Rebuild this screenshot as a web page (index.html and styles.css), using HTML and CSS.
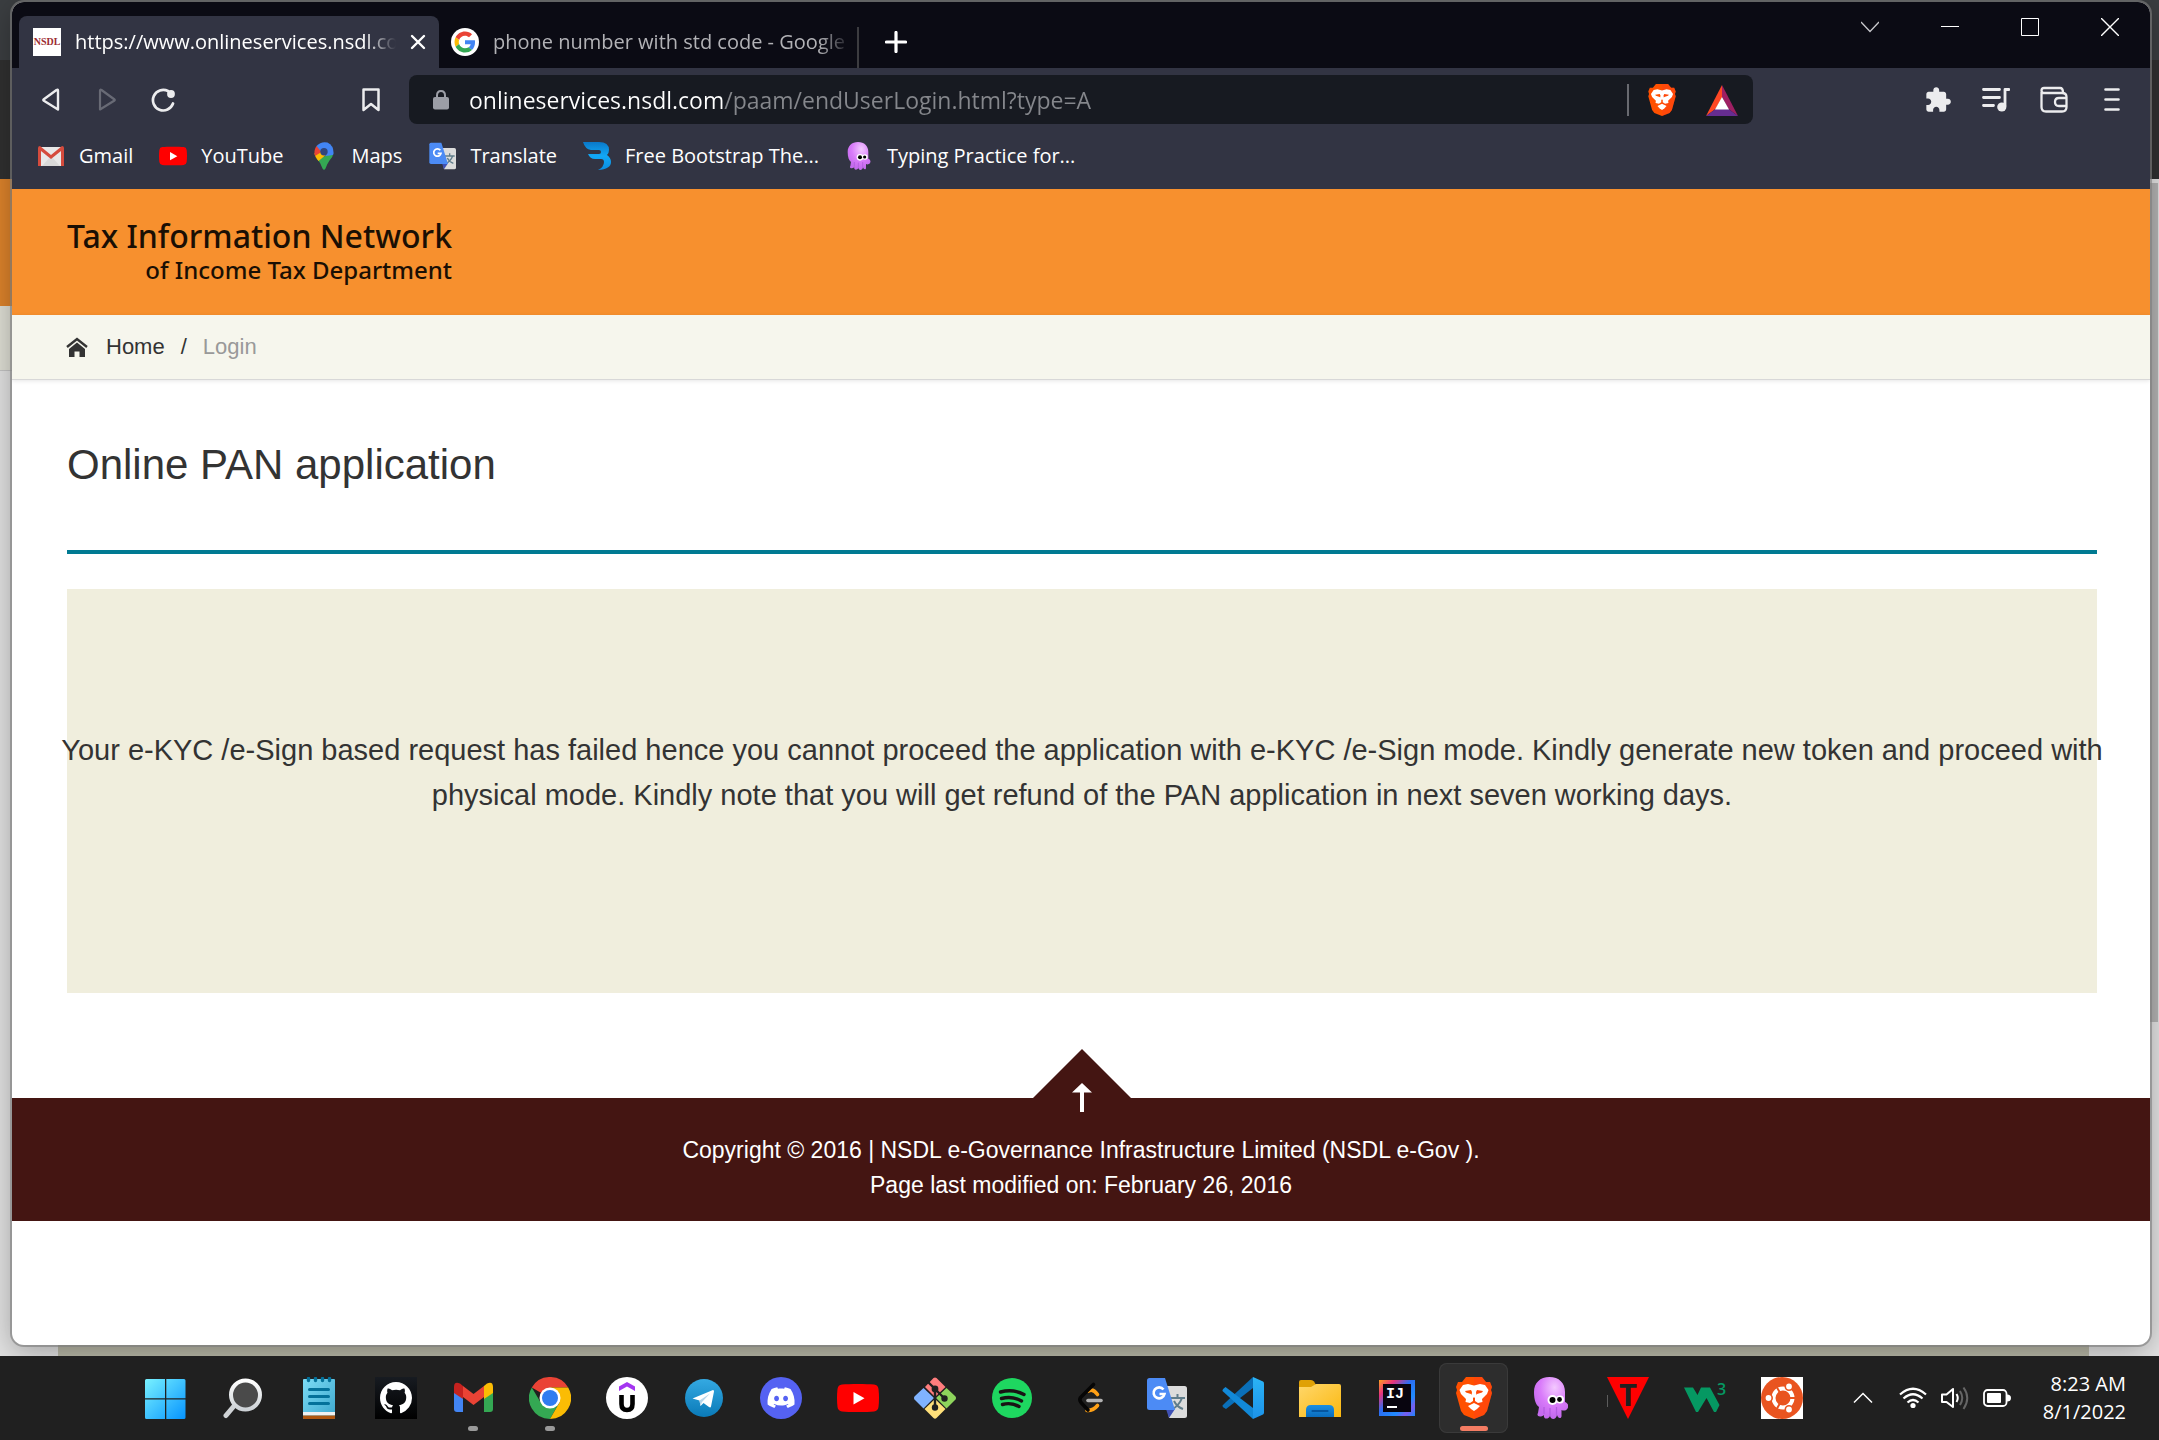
FILE: index.html
```html
<!DOCTYPE html>
<html lang="en">
<head>
<meta charset="utf-8">
<title>Online PAN application</title>
<link rel="stylesheet" href="styles.css">
</head>
<body>
<svg class="sprite" aria-hidden="true">
  <defs>
    <linearGradient id="gWin" x1="0" y1="0" x2="42" y2="42" gradientUnits="userSpaceOnUse"><stop offset="0" stop-color="#7df5ff"/><stop offset="1" stop-color="#0593ff"/></linearGradient>
    <linearGradient id="gLens" x1="0" y1="0" x2="0" y2="1"><stop offset="0" stop-color="#ffffff"/><stop offset="1" stop-color="#cdd2d6"/></linearGradient>
    <linearGradient id="gNote" x1="0" y1="0" x2="1" y2="1"><stop offset="0" stop-color="#7cdcf6"/><stop offset="1" stop-color="#3ca6cc"/></linearGradient>
    <linearGradient id="gHub" x1="0" y1="0" x2="0" y2="1"><stop offset="0" stop-color="#171b21"/><stop offset="1" stop-color="#000000"/></linearGradient>
    <linearGradient id="gTele" x1="0" y1="0" x2="0" y2="1"><stop offset="0" stop-color="#34a9e2"/><stop offset="1" stop-color="#0a7ab8"/></linearGradient>
    <linearGradient id="gFold" x1="0" y1="0" x2="1" y2="1"><stop offset="0" stop-color="#ffd76b"/><stop offset="1" stop-color="#fbb80f"/></linearGradient>
    <linearGradient id="gBlue" x1="0" y1="0" x2="0" y2="1"><stop offset="0" stop-color="#1a8fe3"/><stop offset="1" stop-color="#0a6cbd"/></linearGradient>
    <linearGradient id="gIde" x1="0" y1="0" x2="1" y2="1"><stop offset="0" stop-color="#fda01e"/><stop offset=".22" stop-color="#e8337c"/><stop offset=".45" stop-color="#2c6df2"/><stop offset=".7" stop-color="#1f8bff"/><stop offset=".85" stop-color="#7a5cf0"/><stop offset="1" stop-color="#1688ff"/></linearGradient>
    <linearGradient id="gCode" x1="0" y1="0" x2="0" y2="1"><stop offset="0" stop-color="#2bb4f6"/><stop offset="1" stop-color="#1c93ea"/></linearGradient>
    <linearGradient id="gBoot" x1="0" y1="0" x2="0" y2="1"><stop offset="0" stop-color="#0a78c8"/><stop offset=".5" stop-color="#12a8f6"/><stop offset="1" stop-color="#0b8ce0"/></linearGradient>
    <radialGradient id="gOct" cx=".6" cy=".25" r=".7"><stop offset="0" stop-color="#f3c9ff"/><stop offset=".6" stop-color="#d97bfa"/><stop offset="1" stop-color="#c56bee"/></radialGradient>
  </defs>
  <symbol id="brave" viewBox="0 0 36 42">
    <path fill="#ff5000" d="M10 0H26L30 5L34 5L36 10L35 13L36 16L31 34L28 38L18 42L8 38L5 34L0 16L1 13L0 10L2 5L6 5Z"/>
    <path fill="#ff3a1c" d="M18 0H26L30 5L34 5L36 10L35 13L36 16L31 34L28 38L18 42Z" opacity=".35"/>
    <path fill="#fff" d="M18 8.500L24 7L29 8L32.500 13L31 17L26 22L26.500 25L22 26L19 24V20L21 17L26 15.500L27 14L21 13L20 15L20.500 19L18 21L15.500 19L16 15L15 13L9 14L10 15.500L15 17L17 20V24L14 26L9.500 25L10 22L5 17L3.500 13L7 8L12 7Z"/>
    <path fill="#fff" d="M18 26L24 29L21 32L18 34L15 32L12 29Z"/>
  </symbol>
  <symbol id="octopus" viewBox="0 0 34 42">
    <path fill="url(#gOct)" d="M15.500 0C25 0 31 6 31 15V25C34 26 35 29 33.500 31.500C32 34 29 34 27.500 33V38C28 42 24 42 23 38C22 43 17 43 16 39C14 43 9 42 10 38C6 41 2 39 4 36L5 30C2 28 0 23 0 15C0 6 6 0 15.500 0Z"/>
    <path stroke="#b45de0" stroke-width="1.300" fill="none" d="M10 37V30M16 39V31M22.500 38V30"/>
    <circle cx="18.500" cy="23" r="5" fill="#fff"/><circle cx="26" cy="22.500" r="4" fill="#fff"/>
    <circle cx="18.500" cy="23" r="3" fill="#000"/><circle cx="25.500" cy="22.500" r="2.400" fill="#000"/>
  </symbol>
  <symbol id="youtube" viewBox="0 0 42 28">
    <path fill="#f00" d="M5 .6C12-.2 30-.2 37 .6Q41 1 41.500 5Q42.500 14 41.500 23Q41 27 37 27.400C30 28.200 12 28.200 5 27.400Q1 27 .5 23Q-.5 14 .5 5Q1 1 5 .6Z"/><path fill="#fff" d="M16.500 8V20.500L27.500 14.250Z"/>
  </symbol>
  <symbol id="translate" viewBox="0 0 42 42">
    <path fill="#dcdcdc" d="M20 9H39.500Q42 9 42 11.500V38.500Q42 41 39.500 41H24Z"/>
    <path d="M25 21H40M32.500 17V21M37 21Q34 29 26 33M29 24Q32 30 38 32" fill="none" stroke="#607d8b" stroke-width="2"/>
    <path fill="#3f51b5" d="M21 32H30L24 41Z"/>
    <path fill="#4c8bf5" d="M4.500 1H20L30 33H4.500Q2 33 2 30.500V3.500Q2 1 4.500 1Z"/>
    <path d="M18.500 12.500A5.500 5.500 0 1 0 19.500 17H14.500" fill="none" stroke="#fff" stroke-width="2.600"/>
  </symbol>
</svg>

<div class="desktop">
  <main class="window">
    <header class="titlebar">
      <div class="tabs">
        <div class="tab tab-active">
          <svg class="favicon" viewBox="0 0 28 28"><path fill="#fff" d="M0 0H28V28H0Z"/><text x="14" y="17" font-size="10" font-weight="700" fill="#9c2c33" text-anchor="middle" class="serif">NSDL</text></svg>
          <span class="tab-title">https://www.onlineservices.nsdl.com</span>
          <button class="tab-close" aria-label="Close tab"><svg width="16" height="16" viewBox="0 0 16 16"><path d="M2 2L14 14M14 2L2 14" stroke="#fff" stroke-width="2.400" stroke-linecap="round"/></svg></button>
        </div>
        <div class="tab tab-idle">
          <svg class="favicon" viewBox="0 0 28 28"><circle cx="14" cy="14" r="14" fill="#fff"/>
            <g transform="translate(3.500 3.500) scale(.4375)"><path fill="#ea4335" d="M24 9.500c3.540 0 6.710 1.220 9.210 3.600l6.850-6.850C35.900 2.380 30.470 0 24 0 14.620 0 6.510 5.380 2.560 13.220l7.980 6.190C12.430 13.720 17.740 9.500 24 9.500z"/><path fill="#4285f4" d="M46.980 24.550c0-1.570-.15-3.090-.38-4.550H24v9.020h12.940c-.58 2.960-2.260 5.480-4.780 7.180l7.730 6c4.510-4.180 7.090-10.360 7.090-17.650z"/><path fill="#fbbc05" d="M10.530 28.590c-.48-1.450-.76-2.990-.76-4.590s.27-3.140.76-4.590l-7.980-6.190C.92 16.460 0 20.120 0 24c0 3.880.92 7.540 2.560 10.780l7.970-6.190z"/><path fill="#34a853" d="M24 48c6.480 0 11.930-2.130 15.890-5.810l-7.730-6c-2.150 1.450-4.920 2.300-8.160 2.300-6.260 0-11.570-4.220-13.470-9.910l-7.980 6.190C6.510 42.620 14.620 48 24 48z"/></g></svg>
          <span class="tab-title">phone number with std code - Google Search</span>
        </div>
        <button class="new-tab" aria-label="New tab"><svg width="22" height="22" viewBox="0 0 22 22"><path d="M11 1.500V20.500M1.500 11H20.500" stroke="#fff" stroke-width="3.200" stroke-linecap="round"/></svg></button>
      </div>
      <div class="controls">
        <button aria-label="Search tabs"><svg width="18" height="18" viewBox="0 0 18 18"><path d="M0 4L9 13.500L18 4" stroke="#c8c8cc" stroke-width="1.300" fill="none"/></svg></button>
        <button aria-label="Minimize"><svg width="18" height="18" viewBox="0 0 18 18"><path d="M0 8.500H18" stroke="#fff"/></svg></button>
        <button aria-label="Maximize"><svg width="18" height="18" viewBox="0 0 18 18"><path d="M.5 .5H17.500V17.500H.5Z" stroke="#fff" fill="none"/></svg></button>
        <button aria-label="Close"><svg width="18" height="18" viewBox="0 0 18 18"><path d="M0 0L18 18M18 0L0 18" stroke="#fff" stroke-width="1.400"/></svg></button>
      </div>
    </header>

    <div class="toolbar">
      <div class="nav">
        <button aria-label="Back"><svg width="24" height="24" viewBox="0 0 24 24"><path d="M19 2.500V21.500L4.500 12.500Q4 12 4.500 11.500L17.500 2Q19 1.200 19 2.500Z" fill="none" stroke="#ececee" stroke-width="2.400" stroke-linejoin="round"/></svg></button>
        <button aria-label="Forward" disabled><svg width="24" height="24" viewBox="0 0 24 24"><path d="M5 2.500V21.500L19.500 12.500Q20 12 19.500 11.500L6.500 2Q5 1.200 5 2.500Z" fill="none" stroke="#686a75" stroke-width="2.200" stroke-linejoin="round"/></svg></button>
        <button aria-label="Reload"><svg width="24" height="24" viewBox="0 0 24 24"><path d="M17 3A10.300 10.300 0 1 0 22 15.500" fill="none" stroke="#ececee" stroke-width="2.700" stroke-linecap="round"/><circle cx="20" cy="6" r="3.900" fill="#ececee"/></svg></button>
      </div>
      <button class="bookmark-btn" aria-label="Bookmark this page"><svg width="24" height="24" viewBox="0 0 24 24"><path d="M4.500 1.500H19.500V22L12 16L4.500 22Z" fill="none" stroke="#ececee" stroke-width="2.500" stroke-linejoin="round"/></svg></button>
      <div class="address">
        <svg width="16" height="20" viewBox="0 0 16 20"><path d="M4 9V5.500Q4 1 8 1T12 5.500V9" fill="none" stroke="#9c9ea6" stroke-width="2"/><rect y="7" width="16" height="12.500" rx="2" fill="#9c9ea6"/></svg>
        <input class="url" type="text" aria-label="Address" value="onlineservices.nsdl.com/paam/endUserLogin.html?type=A">
        <button class="shield" aria-label="Brave Shields"><svg width="28" height="32"><use href="#brave"/></svg></button>
        <button class="rewards" aria-label="Brave Rewards"><svg width="32" height="32" viewBox="0 0 32 32"><path fill="#ff4724" d="M16 1V14L9.500 25L0 32Z"/><path fill="#9e1f63" d="M16 1L32 32L22.500 25L16 13Z"/><path fill="#662d91" d="M0 32L9.500 25H22.500L32 32Z"/><path fill="#fff" d="M16 13L23 25.500H9Z"/></svg></button>
      </div>
      <div class="actions">
        <button aria-label="Extensions"><svg width="28" height="28" viewBox="0 0 24 24"><path fill="#ececee" d="M20.500 11H19V7c0-1.100-.9-2-2-2h-4V3.500C13 2.120 11.880 1 10.500 1S8 2.120 8 3.500V5H4c-1.100 0-1.990.9-1.990 2v3.800H3.500c1.490 0 2.700 1.210 2.700 2.700s-1.210 2.700-2.700 2.700H2V20c0 1.100.9 2 2 2h3.800v-1.500c0-1.490 1.210-2.700 2.700-2.700 1.490 0 2.700 1.210 2.700 2.700V22H17c1.100 0 2-.9 2-2v-4h1.500c1.380 0 2.500-1.120 2.500-2.500S21.880 11 20.500 11z"/></svg></button>
        <button aria-label="Media"><svg width="28" height="28" viewBox="0 0 28 28"><path d="M1.500 3.500H17.500M1.500 11.500H17.500M1.500 19.500H11.500" stroke="#ececee" stroke-width="2.800" stroke-linecap="round"/><path d="M27 3.500H23V20" stroke="#ececee" stroke-width="2.800" fill="none" stroke-linecap="round" stroke-linejoin="round"/><circle cx="19.800" cy="21" r="4.600" fill="#ececee"/></svg></button>
        <button aria-label="Wallet"><svg width="28" height="28" viewBox="0 0 28 28"><path d="M1.500 6V21Q1.500 25.500 6 25.500H22Q26.500 25.500 26.500 21V11Q26.500 7 22 7H4Q1.500 7 1.500 4.500Q1.500 2 4 2H20Q23 2 23 6.500" fill="none" stroke="#ececee" stroke-width="2.300"/><path d="M27 12H19Q15 12 15 16T19 20H27" fill="none" stroke="#ececee" stroke-width="2.300"/></svg></button>
        <button aria-label="Menu"><svg width="28" height="28" viewBox="0 0 28 28"><path d="M7.500 3.500H20.500M7.500 13.500H20.500M7.500 23.500H20.500" stroke="#ececee" stroke-width="2.600" stroke-linecap="round"/></svg></button>
      </div>
    </div>

    <nav class="bookmarks" aria-label="Bookmarks">
      <a href="#"><svg width="28" height="28" viewBox="0 0 28 28"><path fill="#e8e8e8" d="M2 5H26V24H2Z"/><path fill="#d9d9d9" d="M5 24L14 14L23 24Z"/><path fill="#d54b3d" d="M1 6Q1 4 3 4L14 13L25 4Q27 4 27 6V24H24V9L14 17L4 9V24H1Z"/></svg>Gmail</a>
      <a href="#"><svg width="28" height="28"><use href="#youtube" y="4" width="28" height="20"/></svg>YouTube</a>
      <a href="#"><svg width="28" height="28" viewBox="0 0 28 28"><path fill="#34a853" d="M7 17L23.500 11Q23 15 19.500 18.500Q17 22 15.500 26.500Q14 29 12.500 26.500Q11 21 7 17Z"/><path fill="#fbbc04" d="M4.500 11L14 8L17 12L8.500 19Q4.500 14.500 4.500 11Z"/><path fill="#ea4335" d="M6.500 4L13 9L5 14Q3.500 8 6.500 4Z"/><path fill="#4285f4" d="M6.500 4Q11-1 17.500 .5Q23.500 3.500 23.500 10.500Q23.500 12 23 13L16 14L11 9.500Z"/><circle cx="14" cy="9.700" r="3.700" fill="#31467a"/></svg>Maps</a>
      <a href="#"><svg width="28" height="28"><use href="#translate"/></svg>Translate</a>
      <a href="#"><svg width="28" height="28" viewBox="0 0 28 28"><path fill="url(#gBoot)" d="M0 0H16Q26 0 26 8Q26 11 24 13Q28 16 28 20Q28 27 15 28Q21 25 21 20Q21 17 18 17H12Q7 17 5 12H16Q18 12 18 10T16 8H8Q2 7 0 0Z"/></svg>Free Bootstrap The...</a>
      <a href="#"><svg width="28" height="28"><use href="#octopus"/></svg>Typing Practice for...</a>
    </nav>

    <div class="site">
      <div class="brand">
        <div class="logo"><span class="logo-main">Tax Information Network</span><span class="logo-sub">of Income Tax Department</span></div>
      </div>
      <nav class="crumbs" aria-label="Breadcrumb">
        <svg width="22" height="20" viewBox="0 0 22 20"><path d="M1 10L11 2L21 10" fill="none" stroke="#333" stroke-width="2.400"/><path fill="#333" d="M3 12L11 5.500L19 12V20H13.500V14.500H8.500V20H3Z"/></svg>
        <a href="#">Home</a><span>/</span><span class="current">Login</span>
      </nav>
      <div class="content">
        <h1>Online PAN application</h1>
        <div class="notice">
          <p>Your e-KYC /e-Sign based request has failed hence you cannot proceed the application with e-KYC /e-Sign mode. Kindly generate new token and proceed with physical mode. Kindly note that you will get refund of the PAN application in next seven working days.</p>
        </div>
      </div>
      <footer class="footer">
        <a class="to-top" href="#" aria-label="Back to top"><svg width="100" height="64" viewBox="0 0 100 64"><path fill="#441512" d="M50 0L100 50V64H0V50Z"/><path fill="#fff" d="M50 34L60 43.500H52V63H48V43.500H40Z"/></svg></a>
        <p>Copyright © 2016 | NSDL e-Governance Infrastructure Limited (NSDL e-Gov ).</p>
        <p>Page last modified on: February 26, 2016</p>
      </footer>
    </div>
  </main>
</div>

<div class="taskbar">
  <nav class="apps" aria-label="Taskbar">
    <button aria-label="Start"><svg viewBox="0 0 42 42"><path fill="url(#gWin)" d="M2.500 2H21V21.300H1V3.500Q1 2 2.500 2ZM22.300 2H40Q41.500 2 41.500 3.500V21.300H22.300ZM1 22.600H21V42H2.500Q1 42 1 40.500ZM22.300 22.600H41.500V40.500Q41.500 42 40 42H22.300Z"/></svg></button>
    <button aria-label="Search"><svg viewBox="0 0 42 42"><path d="M13 29L5 38.500" stroke="#cfd3d6" stroke-width="5" stroke-linecap="round"/><circle cx="24.500" cy="18" r="14.500" fill="#4a4a4a" stroke="url(#gLens)" stroke-width="4"/></svg></button>
    <button aria-label="Notepad"><svg viewBox="0 0 42 42"><rect x="5" y="2" width="32" height="40" rx="1" fill="url(#gNote)"/><path fill="#f0f0f0" d="M5 35H37V38.500H5Z"/><path fill="#b0560f" d="M5 38.500H37V41Q37 42 36 42H6Q5 42 5 41Z"/><path d="M11.500 12.500H30.500M11.500 19.500H30.500M11.500 26.500H30.500" stroke="#04719a" stroke-width="3" stroke-linecap="round"/><path d="M10.500 1.500V3.500M17.500 1.500V3.500M24.500 1.500V3.500M31.500 1.500V3.500" stroke="#04719a" stroke-width="3.400" stroke-linecap="round"/></svg></button>
    <button aria-label="GitHub"><svg viewBox="0 0 42 42"><path fill="url(#gHub)" d="M0 0H42V42H0Z"/><path transform="translate(5 5) scale(2)" fill="#fff" d="M8 0C3.580 0 0 3.580 0 8c0 3.540 2.290 6.530 5.470 7.590.4.070.55-.17.55-.38 0-.19-.01-.82-.01-1.490-2.010.37-2.530-.49-2.690-.94-.09-.23-.48-.94-.82-1.130-.28-.15-.68-.52-.01-.53.63-.01 1.080.58 1.230.82.72 1.210 1.870.87 2.330.66.070-.52.28-.87.51-1.070-1.780-.2-3.640-.89-3.640-3.950 0-.87.31-1.590.82-2.150-.08-.2-.36-1.020.08-2.120 0 0 .67-.21 2.200.82.64-.18 1.320-.27 2-.27s1.360.09 2 .27c1.530-1.040 2.200-.82 2.200-.82.44 1.100.16 1.920.08 2.120.51.56.82 1.270.82 2.150 0 3.070-1.870 3.750-3.650 3.950.29.25.54.73.54 1.480 0 1.070-.01 1.930-.01 2.200 0 .21.15.46.55.38A8.010 8.010 0 0 0 16 8c0-4.420-3.580-8-8-8z"/></svg></button>
    <button class="running" aria-label="Gmail"><svg viewBox="0 0 42 42"><path fill="#4285f4" d="M2 13L11 19V35H5Q2 35 2 32Z"/><path fill="#34a853" d="M32 19L41 13V32Q41 35 38 35H32Z"/><path fill="#c5221f" d="M2 16V10Q2 4 8 6.500L11 9V22Z"/><path fill="#fbbc04" d="M41 16V10Q41 4 35 6.500L32 9V22Z"/><path fill="#ea4335" d="M11 9L21.500 17L32 9V20L21.500 28L11 20Z"/></svg></button>
    <button class="running" aria-label="Chrome"><svg viewBox="0 0 42 42"><path fill="#ea4335" d="M21 21L2.800 10.500A21 21 0 0 1 39.200 10.500H21Z"/><path fill="#34a853" d="M2.800 10.500A21 21 0 0 0 21 42L30 26L21 21L12 26Z"/><path fill="#fbbc04" d="M39.200 10.500A21 21 0 0 1 21 42L30.500 25.500L21 10.500Z"/><circle cx="21" cy="21" r="10.500" fill="#fff"/><circle cx="21" cy="21" r="8" fill="#2f7cf0"/></svg></button>
    <button aria-label="Udemy"><svg viewBox="0 0 42 42"><circle cx="21" cy="21" r="21" fill="#fff"/><path fill="#a435f0" d="M21 5L29 9.500V14L21 9.500L13 14V9.500Z"/><path d="M15.500 18V27Q15.500 33 21 33T26.500 27V18" fill="none" stroke="#000" stroke-width="4.600"/></svg></button>
    <button aria-label="Telegram"><svg viewBox="0 0 42 42"><circle cx="21" cy="21" r="19" fill="url(#gTele)"/><path fill="#fff" d="M9.500 21.500L30 13Q31.200 13 31 14.500L28 29.500Q27.500 31 26 30L20.500 26L17.500 29L16.500 23.500Z"/><path fill="#b8d6ea" d="M16.500 23.500L27 16.500L19 25L17.500 29Z"/></svg></button>
    <button aria-label="Discord"><svg viewBox="0 0 42 42"><circle cx="21" cy="21" r="21" fill="#5562f2"/><path transform="translate(7.500 7) scale(1.130)" fill="#fff" d="M20.317 4.370a19.791 19.791 0 00-4.885-1.515.074.074 0 00-.079.037c-.211.375-.445.865-.608 1.250-1.845-.276-3.680-.276-5.487 0-.164-.393-.406-.874-.618-1.250a.077.077 0 00-.079-.037 19.736 19.736 0 00-4.885 1.515.070.070 0 00-.032.028C.533 9.046-.319 13.580.099 18.058a.082.082 0 00.031.056c2.053 1.508 4.041 2.423 5.993 3.029a.078.078 0 00.084-.028c.462-.630.873-1.295 1.226-1.994a.076.076 0 00-.042-.106c-.653-.248-1.274-.550-1.872-.892a.077.077 0 01-.008-.128c.126-.094.252-.192.372-.291a.074.074 0 01.078-.011c3.928 1.793 8.180 1.793 12.061 0a.074.074 0 01.079.010c.120.099.246.198.373.292a.077.077 0 01-.007.128 12.299 12.299 0 01-1.873.891.077.077 0 00-.041.107c.360.698.772 1.363 1.225 1.993a.076.076 0 00.084.029c1.961-.607 3.950-1.522 6.002-3.029a.077.077 0 00.031-.055c.500-5.177-.838-9.674-3.549-13.660a.061.061 0 00-.031-.029zM8.020 15.331c-1.183 0-2.157-1.086-2.157-2.419 0-1.333.956-2.419 2.157-2.419 1.211 0 2.176 1.095 2.157 2.419 0 1.333-.956 2.419-2.157 2.419zm7.975 0c-1.183 0-2.157-1.086-2.157-2.419 0-1.333.955-2.419 2.157-2.419 1.211 0 2.176 1.095 2.157 2.419 0 1.333-.946 2.419-2.157 2.419Z"/></svg></button>
    <button aria-label="YouTube"><svg viewBox="0 0 42 42"><use href="#youtube" y="7" width="42" height="28"/></svg></button>
    <button aria-label="Git"><svg viewBox="0 0 42 42"><path fill="#ff7d7d" d="M19.500 1Q21 0 22.500 1L31.500 10L21 20L11 10Z"/><path fill="#8ed45c" d="M32.500 11L41.500 19.500Q42.500 21 41.500 22.500L32.500 31.500L22 21Z"/><path fill="#ffe07a" d="M21 22L31.500 32L22.500 41Q21 42.500 19.500 41L10.500 32Z"/><path fill="#80b3ff" d="M9.500 11L20 21L9.500 31.500L.5 22.500Q-.5 21 .5 19.500Z"/><path d="M13 4L21 12V30M21 12L30 21" fill="none" stroke="#202020" stroke-width="2.400"/><circle cx="21" cy="12" r="3.400" fill="#202020"/><circle cx="30.500" cy="21.500" r="3.200" fill="#202020"/><circle cx="21" cy="30.500" r="3.200" fill="#202020"/></svg></button>
    <button aria-label="Spotify"><svg viewBox="0 0 42 42"><circle cx="21" cy="21" r="20" fill="#1ed760"/><path d="M9.500 15Q22 11.500 33 17.500M10.500 21.500Q21 18.500 30.500 24M11.500 27.500Q20 25 28 29.500" fill="none" stroke="#191414" stroke-width="3.400" stroke-linecap="round"/></svg></button>
    <button aria-label="LeetCode"><svg viewBox="0 0 42 42"><path d="M20.500 14Q25 11 29.500 17.500M29.500 28.500Q25 34 19 33.500" fill="none" stroke="#ffa116" stroke-width="3.600" stroke-linecap="round"/><path d="M25.500 7.500L12.500 20.500Q11 23 13 25.500L20 33" fill="none" stroke="#050505" stroke-width="3.600" stroke-linecap="round"/><path d="M20 23.500H33" stroke="#b3b3b3" stroke-width="3.600" stroke-linecap="round"/></svg></button>
    <button aria-label="Translate"><svg viewBox="0 0 42 42"><use href="#translate" width="42" height="42"/></svg></button>
    <button aria-label="Visual Studio Code"><svg viewBox="0 0 42 42"><path fill="#0a6fb8" d="M31 0L3.500 25.500L.5 28.500Q0 30 4 32L31 11Z"/><path fill="#1289d8" d="M3.500 10L31 31V42L.5 14Q0 12.500 3.500 10Z"/><path fill="url(#gCode)" d="M31 0L41 4.500Q42 5 42 6.500V35.500Q42 37 41 37.500L31 42Z"/></svg></button>
    <button aria-label="File Explorer"><svg viewBox="0 0 42 42"><path fill="#e0a106" d="M0 5Q0 3 2 3H12Q14 3 15 4.500L17 8L12 12H0Z"/><path fill="url(#gFold)" d="M0 10H12L17 7H40Q42 7 42 9V40H0Z"/><path fill="url(#gBlue)" d="M7 40V33Q7 28 12 28H30Q35 28 35 33V40Z"/><path d="M13.500 34H28.500" stroke="#0556a0" stroke-width="2.200" stroke-linecap="round"/></svg></button>
    <button aria-label="IntelliJ IDEA"><svg viewBox="0 0 42 42"><path fill="url(#gIde)" d="M3 3H39V39H3Z"/><path fill="#08050f" d="M7 7H35V35H7Z"/><text x="10" y="21" font-size="15" font-weight="700" fill="#fff" class="mono">IJ</text><path fill="#fff" d="M11 29H21V31H11Z"/></svg></button>
    <button class="current-app" aria-label="Brave"><svg viewBox="0 0 42 42"><use href="#brave" x="3" width="36" height="42"/></svg></button>
    <button aria-label="Typing Practice"><svg viewBox="0 0 42 42"><use href="#octopus" x="4" width="34" height="42"/></svg></button>
    <button aria-label="Typing"><svg viewBox="0 0 42 42"><path fill="red" d="M0 0H42L21 42Z"/><path d="M.5 18V30" stroke="#5c5c5c"/><text x="21" y="29" font-size="31" font-weight="700" fill="#202020" text-anchor="middle" class="sans">T</text></svg></button>
    <button aria-label="W3Schools"><svg viewBox="0 0 42 42"><path fill="#059862" d="M0 10.500H9L13.500 18L17 10.500H26L35.500 28L32 35H30L22.500 21L14 35H12Z"/><text x="33" y="18" font-size="16" font-weight="600" fill="#059862" class="sans">3</text></svg></button>
    <button aria-label="Ubuntu"><svg viewBox="0 0 42 42"><path fill="#fff" d="M0 0H42V42H0Z"/><circle cx="21" cy="21" r="21" fill="#e95420"/><circle cx="22" cy="21" r="9.500" fill="none" stroke="#fff" stroke-width="4"/><path d="M22 21L36 21M22 21L14 7M22 21L14 35" stroke="#e95420" stroke-width="2"/><g fill="#fff" stroke="#e95420" stroke-width="1.600"><circle cx="7.500" cy="21" r="3.700"/><circle cx="28" cy="9.500" r="3.700"/><circle cx="28" cy="32.500" r="3.700"/></g></svg></button>
  </nav>
  <div class="tray">
    <button aria-label="Show hidden icons"><svg width="28" height="28" viewBox="0 0 28 28"><path d="M5 18.500L14 9.500L23 18.500" fill="none" stroke="#fff" stroke-width="1.500"/></svg></button>
    <div class="status">
      <svg width="28" height="28" viewBox="0 0 28 28"><g fill="none" stroke="#fff" stroke-width="2.200"><path d="M1 10.500Q14-1 27 10.500" /><path d="M4.500 14.500Q14 6 23.500 14.500"/><path d="M8.500 18.500Q14 13.500 19.500 18.500"/></g><circle cx="14" cy="21.500" r="2.600" fill="#fff"/></svg>
      <svg width="28" height="28" viewBox="0 0 28 28"><path d="M1 10.500H5.500L12 5V23L5.500 18H1Z" fill="none" stroke="#fff" stroke-width="2" stroke-linejoin="round"/><path d="M15.500 10Q18 14 15.500 18" fill="none" stroke="#fff" stroke-width="2"/><path d="M19 7Q23.500 14 19 21M22.500 3.500Q30 14 22.500 25" fill="none" stroke="#666" stroke-width="2"/></svg>
      <svg width="28" height="28" viewBox="0 0 28 28"><rect x="1" y="6" width="22.500" height="16" rx="3.500" fill="none" stroke="#fff" stroke-width="1.800"/><rect x="4" y="9" width="14" height="10" rx="1" fill="#fff"/><path d="M24 10.500Q28 10.500 28 14T24 17.500Z" fill="#fff"/></svg>
    </div>
    <div class="clock"><time>8:23 AM</time><time>8/1/2022</time></div>
  </div>
</div>
</body>
</html>
```
FILE: styles.css
```css
* { box-sizing: border-box; }

body {
  margin: 0;
  min-height: 100vh;
  display: flex;
  flex-direction: column;
  font-family: "Open Sans", "Noto Sans", sans-serif;
  font-size: 20px;
}

button {
  padding: 0;
  border: 0;
  background: none;
  color: inherit;
  font: inherit;
  display: flex;
  align-items: center;
  justify-content: center;
}

a { color: inherit; text-decoration: none; }
h1, p { margin: 0; font-weight: 400; }
svg { display: block; flex: none; }

.sprite { position: absolute; width: 0; height: 0; }
.sans { font-family: "Open Sans", sans-serif; }
.serif { font-family: "Liberation Serif", serif; }
.mono { font-family: "Liberation Mono", monospace; }

/* Desktop with the page of another window showing round the edges */
.desktop {
  flex: 1;
  display: flex;
  padding: 2px 9px 11px 12px;
  background:
    linear-gradient(#b9b8a7, #b9b8a7) 58px 100% / calc(100% - 128px) 11px no-repeat,
    linear-gradient(#3b3e41 60px, #303030 60px 179px, transparent 179px),
    linear-gradient(transparent 183px, #b4b4b4 183px 1022px, transparent 1022px) calc(100% - 1px) 0 / 8px 100% no-repeat,
    linear-gradient(90deg, transparent 50%, #e4e4e4 50%),
    linear-gradient(#dd832b 306px, #dfdfd5 306px 370px, #c4c4c4 370px 371px, #e2e2e2 371px);
}

.window {
  flex: 1;
  display: flex;
  flex-direction: column;
  overflow: hidden;
  border-radius: 12px;
  background: #fff;
  box-shadow: 0 0 0 2px #7e7e7ea0, 0 6px 30px #00000050;
}

/* Tab strip */
.titlebar {
  display: flex;
  justify-content: space-between;
  height: 66px;
  background: #0b0b14;
  color: #fff;
}

.tabs { display: flex; align-items: flex-end; padding-left: 7px; }

.tab {
  display: flex;
  align-items: center;
  width: 420px;
  height: 52px;
  padding: 0 5px 0 14px;
}

.tab-active { background: #323443; border-radius: 8px 8px 0 0; font-weight: 500; }
.tab-idle { padding: 0 6px 0 12px; color: #b2b2b6; border-image: linear-gradient(transparent 12px, #3c3c40 12px) 1; border-right: 2px solid; }
.favicon { width: 28px; height: 28px; margin-right: 14px; }

.tab-title {
  flex: 1;
  overflow: hidden;
  white-space: nowrap;
  line-height: 28px;
  mask-image: linear-gradient(90deg, #000 calc(100% - 32px), transparent);
}

.tab-close { width: 32px; height: 32px; margin-left: 6px; }
.new-tab { width: 74px; height: 52px; }
.controls { display: flex; align-items: flex-start; }
.controls button { width: 80px; height: 50px; }

/* Navigation row */
.toolbar {
  display: flex;
  align-items: center;
  height: 63px;
  background: #323443;
}

.nav { display: flex; padding-left: 11px; }
.nav button { width: 56px; height: 48px; }
.bookmark-btn { width: 76px; height: 48px; margin-left: 142px; }

.address {
  flex: 1;
  display: flex;
  align-items: center;
  height: 49px;
  padding: 0 14px 0 24px;
  border-radius: 8px;
  background: #171a21;
}

.url {
  flex: 1;
  min-width: 0;
  height: 48px;
  margin-left: 20px;
  padding: 0;
  border: 0;
  outline: 0;
  font: 23px "Open Sans", "Noto Sans", sans-serif;
  color: transparent;
  background: linear-gradient(90deg, #fff 254px, #85878c 254px);
  background-clip: text;
}

.shield { width: 68px; height: 32px; border-left: 2px solid #686a70; }
.rewards { width: 34px; height: 32px; margin-left: 10px; }
.actions { display: flex; justify-content: flex-end; width: 397px; padding-right: 9px; }
.actions button { width: 58px; height: 48px; }

.bookmarks {
  display: flex;
  align-items: center;
  gap: 26px;
  height: 58px;
  padding: 0 25px 9px;
  background: #323443;
  color: #fff;
}

.bookmarks a { display: flex; align-items: center; gap: 14px; }

/* Site */
.site { font-family: "Liberation Sans", Arial, sans-serif; color: #333; }

.brand {
  display: flex;
  height: 126px;
  padding: 28px 55px;
  background: #f7902e;
  color: #1a0f04;
  font-family: "Noto Sans", sans-serif;
  font-weight: 500;
}

.logo { display: flex; flex-direction: column; align-items: flex-end; }
.logo-main { font-size: 32px; line-height: 38px; }
.logo-sub { font-size: 24px; line-height: 30px; }

.crumbs {
  display: flex;
  align-items: center;
  gap: 16px;
  height: 65px;
  padding: 0 54px;
  font-size: 22px;
  background: #f6f6ed;
  border-bottom: 1px solid #d8d8d8;
  box-shadow: 0 1px 4px #0000001a;
}

.crumbs svg { margin-right: 2px; }
.current { color: #999; }

.content { padding: 0 53px 0 55px; }

h1 {
  height: 174px;
  padding-top: 60px;
  border-bottom: 4px solid #007a92;
  font-size: 42px;
  line-height: 50px;
}

.notice {
  min-height: 404px;
  margin-top: 35px;
  padding: 139px 0 120px;
  background: #f0eedd;
  font-size: 29px;
  line-height: 45px;
  text-align: center;
}

.notice p { margin: 0 -8px; }

.footer {
  position: relative;
  height: 123px;
  margin-top: 105px;
  padding-top: 35px;
  background: #441512;
  color: #fff;
  font-size: 23px;
  line-height: 35px;
  text-align: center;
}

.to-top { position: absolute; top: -49px; left: calc(50% - 49px); }

/* Taskbar */
.taskbar {
  display: flex;
  justify-content: space-between;
  align-items: center;
  height: 84px;
  padding: 0 33px 0 130px;
  background: #202020;
  color: #fff;
}

.apps { display: flex; gap: 8px; }

.apps button {
  position: relative;
  width: 69px;
  height: 70px;
  border-radius: 8px;
}

.apps svg { width: 42px; height: 42px; }
.current-app { background: #2d2d2d; box-shadow: inset 0 0 0 1px #3a3a3a; }

.running::after, .current-app::after {
  content: "";
  position: absolute;
  bottom: 2px;
  left: 50%;
  width: 10px;
  height: 5px;
  margin-left: -5px;
  border-radius: 3px;
  background: #9a9a9a;
}

.apps .current-app { background: #2d2d2d; }
.current-app::after { width: 28px; margin-left: -14px; background: #f47c63; }

.tray { display: flex; align-items: center; }
.status { display: flex; gap: 14px; margin: 0 32px 0 22px; }
.clock { display: flex; flex-direction: column; align-items: flex-end; line-height: 28px; }
```
